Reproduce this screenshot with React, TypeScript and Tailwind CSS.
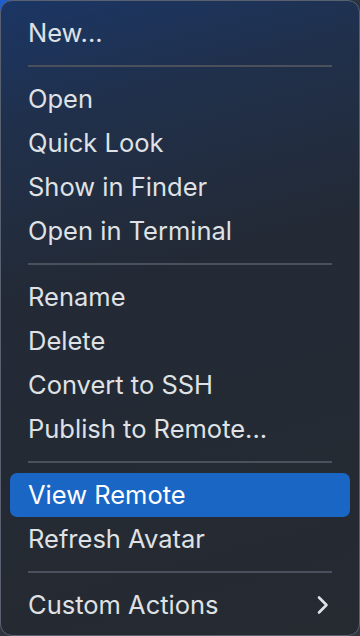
import React from "react";

type Entry = { label: string; active?: boolean; submenu?: boolean } | "sep";

const entries: Entry[] = [
  { label: "New..." },
  "sep",
  { label: "Open" },
  { label: "Quick Look" },
  { label: "Show in Finder" },
  { label: "Open in Terminal" },
  "sep",
  { label: "Rename" },
  { label: "Delete" },
  { label: "Convert to SSH" },
  { label: "Publish to Remote..." },
  "sep",
  { label: "View Remote", active: true },
  { label: "Refresh Avatar" },
  "sep",
  { label: "Custom Actions", submenu: true },
];

const Chevron = () => (
  <svg width="14" height="20" viewBox="0 0 14 20" fill="none" className="shrink-0">
    <path d="M3 2.5 L10.5 10 L3 17.5" stroke="#dfe2e7" strokeWidth="2.6" strokeLinecap="round" strokeLinejoin="round" />
  </svg>
);

export default function App() {
  return (
    <div className="w-[360px] h-[636px] bg-[linear-gradient(135deg,#1f5fd0_0%,#2b3242_20%,#34373d_100%)]">
      <div
        className="h-full w-full rounded-[12px] border border-[#596070] overflow-hidden bg-[linear-gradient(165deg,#1b3665_0%,#20304b_18%,#232a36_42%,#262a31_100%)] py-[10px]"
        style={{ fontFamily: "Inter, 'Noto Sans', sans-serif" }}
      >
        {entries.map((e, i) =>
          e === "sep" ? (
            <div key={i} className="h-[22px] flex items-center px-[27px]">
              <div className="h-[2px] w-full bg-[#4a505c]" />
            </div>
          ) : (
            <div
              key={i}
              className={`mx-[9px] h-[44px] flex items-center justify-between pl-[18px] pr-[20px] rounded-[7px] text-[25.5px] leading-none ${
                e.active ? "bg-[#1a66c5] text-white" : "text-[#dfe1e5]"
              }`}
            >
              <span>{e.label}</span>
              {e.submenu && <Chevron />}
            </div>
          )
        )}
      </div>
    </div>
  );
}
